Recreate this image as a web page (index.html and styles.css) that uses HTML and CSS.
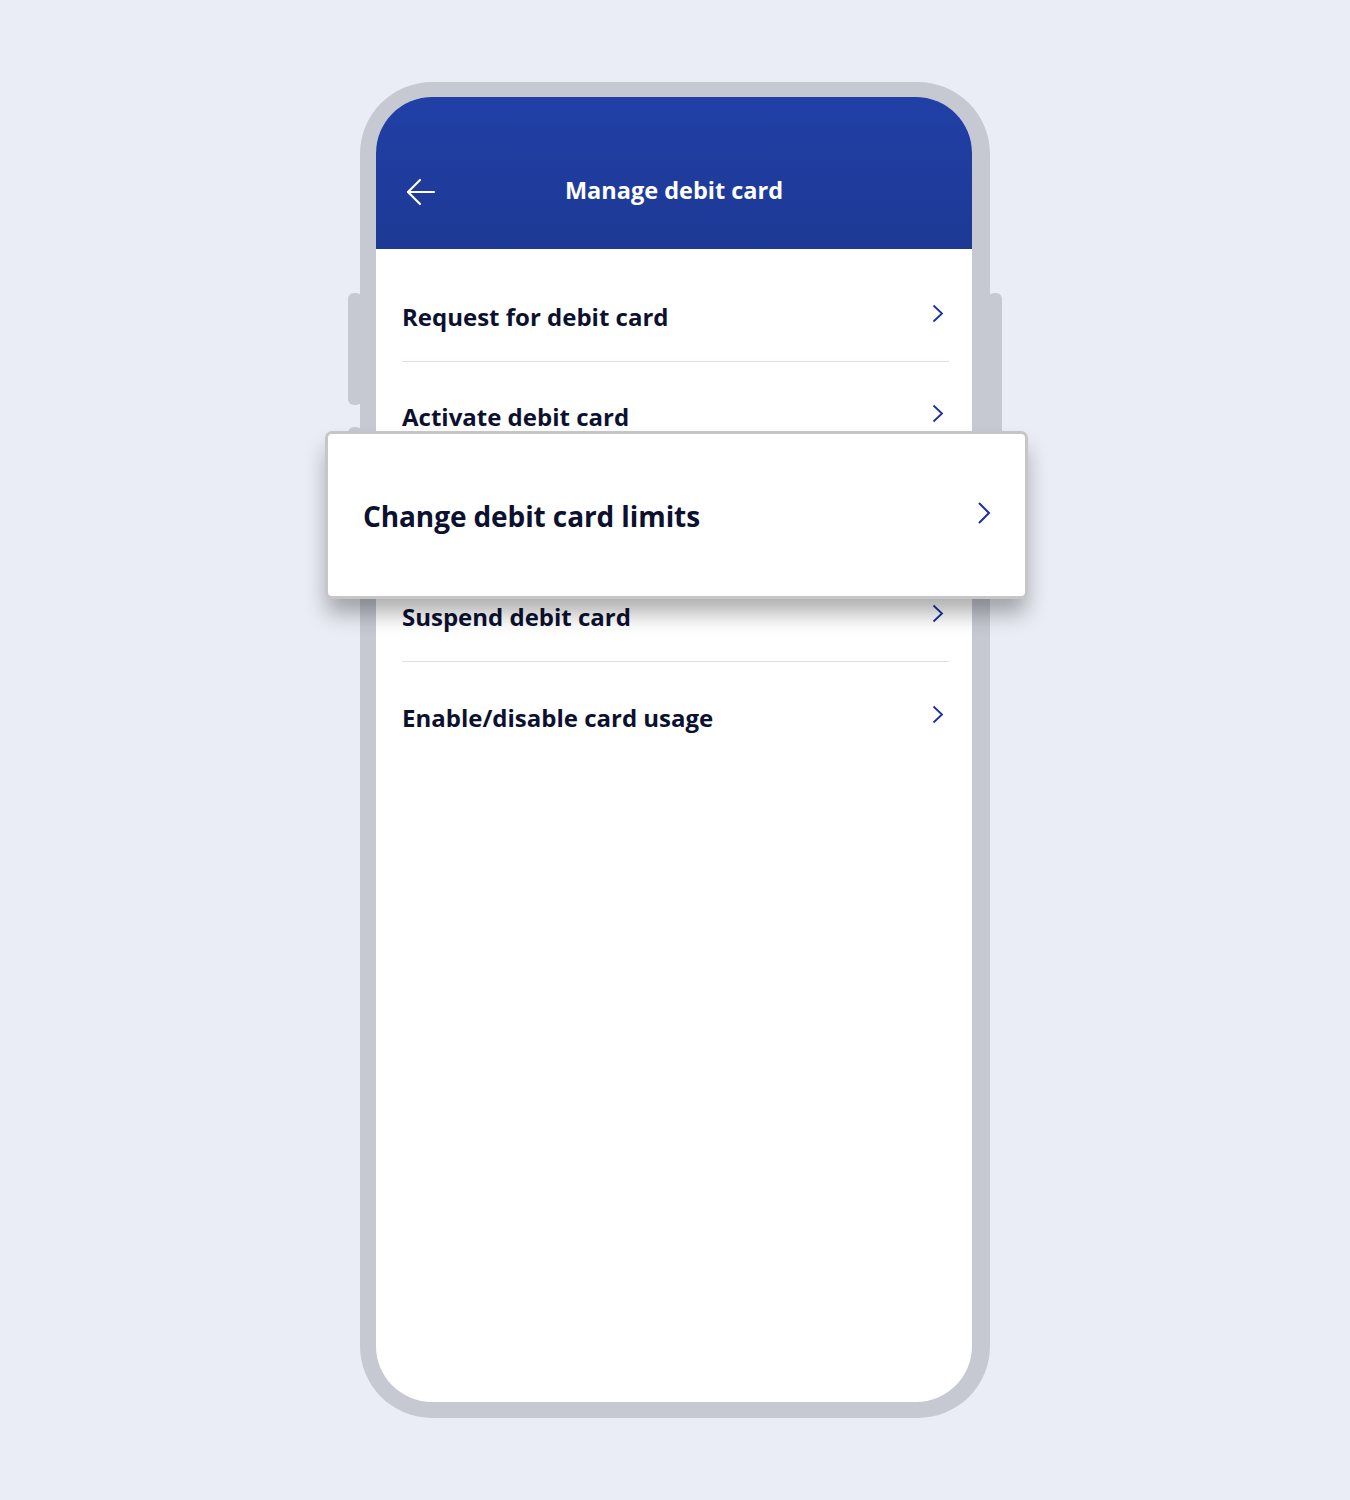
FILE: index.html
```html
<!DOCTYPE html>
<html lang="en">
<head>
<meta charset="utf-8">
<title>Manage debit card</title>
<link rel="stylesheet" href="styles.css">
</head>
<body>
<div class="stage">
  <div class="phone">
    <span class="btn btn-left-1"></span>
    <span class="btn btn-left-2"></span>
    <span class="btn btn-right"></span>
    <div class="screen">
      <header class="appbar">
        <svg class="back" width="30" height="28" viewBox="0 0 30 28" fill="none" stroke="#ffffff" stroke-width="2.2" stroke-linecap="round" stroke-linejoin="round">
          <path d="M28 14H2"/>
          <path d="M14 2L2 14L14 26"/>
        </svg>
        <h1 class="title">Manage debit card</h1>
      </header>
      <ul class="menu">
        <li class="row"><span>Request for debit card</span><svg class="chev" width="12" height="19" viewBox="0 0 12 19" fill="none" stroke="#1b2fa0" stroke-width="1.8"><path d="M1.5 1.5L10 9.5L1.5 17.5"/></svg></li>
        <li class="row"><span>Activate debit card</span><svg class="chev" width="12" height="19" viewBox="0 0 12 19" fill="none" stroke="#1b2fa0" stroke-width="1.8"><path d="M1.5 1.5L10 9.5L1.5 17.5"/></svg></li>
        <li class="row"><span>Change debit card limits</span><svg class="chev" width="12" height="19" viewBox="0 0 12 19" fill="none" stroke="#1b2fa0" stroke-width="1.8"><path d="M1.5 1.5L10 9.5L1.5 17.5"/></svg></li>
        <li class="row"><span>Suspend debit card</span><svg class="chev" width="12" height="19" viewBox="0 0 12 19" fill="none" stroke="#1b2fa0" stroke-width="1.8"><path d="M1.5 1.5L10 9.5L1.5 17.5"/></svg></li>
        <li class="row last"><span>Enable/disable card usage</span><svg class="chev" width="12" height="19" viewBox="0 0 12 19" fill="none" stroke="#1b2fa0" stroke-width="1.8"><path d="M1.5 1.5L10 9.5L1.5 17.5"/></svg></li>
      </ul>
    </div>
    <div class="popcard">
      <span>Change debit card limits</span>
      <svg class="chev-lg" width="14" height="24" viewBox="0 0 14 24" fill="none" stroke="#1b2fa0" stroke-width="2"><path d="M2 2L12 12L2 22"/></svg>
    </div>
  </div>
</div>
</body>
</html>
```

FILE: styles.css
```css
* { box-sizing: border-box; }

html, body {
  margin: 0;
  padding: 0;
  background: #eaedf5;
  font-family: "Open Sans", Lato, "Liberation Sans", sans-serif;
}

.stage {
  width: 1350px;
  height: 1500px;
  padding-top: 82px;
}

.phone {
  position: relative;
  width: 630px;
  height: 1336px;
  margin: 0 auto;
  border-style: solid;
  border-color: #c6c9d2;
  border-width: 15px 18px 16px 16px;
  border-radius: 72px;
  background: #c6c9d2;
}

.btn {
  position: absolute;
  width: 14px;
  background: #c6c9d2;
  border-radius: 6px;
}
.btn-left-1 { left: -28px; top: 196px; height: 112px; }
.btn-left-2 { left: -28px; top: 330px; height: 120px; }
.btn-right { right: -30px; top: 196px; height: 200px; }

.screen {
  width: 100%;
  height: 100%;
  background: #ffffff;
  border-radius: 56px;
  overflow: hidden;
}

.appbar {
  height: 152px;
  background: linear-gradient(180deg, #2140a6 0%, #1d3995 100%);
  display: flex;
  align-items: center;
  justify-content: center;
  padding-top: 34px;
  position: relative;
}

.back {
  position: absolute;
  left: 30px;
  top: 81px;
}

.title {
  margin: 0;
  color: #ffffff;
  font-size: 23.5px;
  font-weight: 700;
  letter-spacing: 0px;
}

.menu {
  list-style: none;
  margin: 0;
  padding: 13px 23px 0 26px;
}

.row {
  height: 100px;
  padding-top: 10px;
  display: flex;
  align-items: center;
  justify-content: space-between;
  border-bottom: 1px solid #dae0f0;
  color: #0c1130;
  font-size: 24px;
  font-weight: 700;
  letter-spacing: 0px;
}
.row.last { border-bottom: none; }

.chev {
  margin-right: 5px;
  margin-top: -6px;
}

.popcard {
  position: absolute;
  left: -51px;
  top: 334px;
  width: 703px;
  height: 168px;
  background: #ffffff;
  border: 3px solid #c6c6c8;
  border-radius: 7px;
  display: flex;
  align-items: center;
  justify-content: space-between;
  padding: 2px 34px 0 35px;
  color: #0c1130;
  font-size: 28px;
  font-weight: 700;
  letter-spacing: -0.1px;
  box-shadow: 0 16px 22px -2px rgba(0, 0, 0, 0.32);
}

.chev-lg { margin-top: -6px; }
```
